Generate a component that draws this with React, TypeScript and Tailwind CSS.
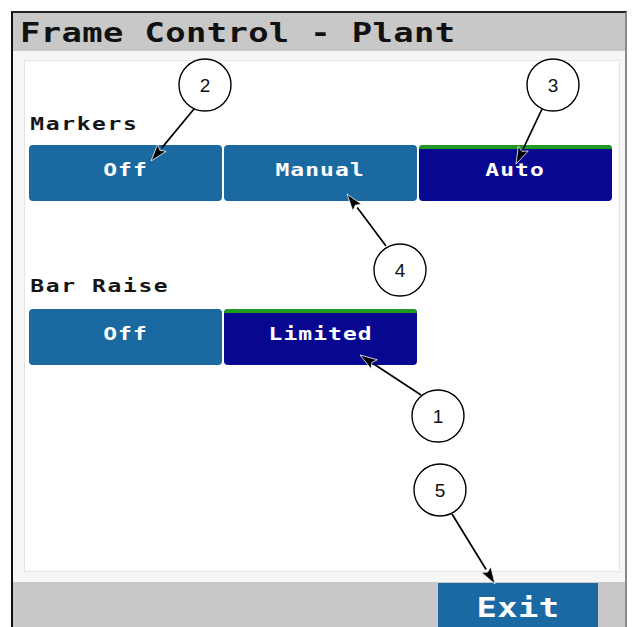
const mono = { fontFamily: '"DejaVu Sans Mono", "Liberation Mono", monospace' };

type Seg = { label: string; active?: boolean };

const markers: Seg[] = [{ label: 'Off' }, { label: 'Manual' }, { label: 'Auto', active: true }];
const barRaise: Seg[] = [{ label: 'Off' }, { label: 'Limited', active: true }];

function SegButton({ seg }: { seg: Seg }) {
  return (
    <div
      className={`w-[193px] h-[56px] rounded-[4px] flex items-center justify-center text-white font-bold text-[17px] tracking-[0.8px] overflow-hidden relative ${
        seg.active ? 'bg-[#07078f]' : 'bg-[#1a69a0]'
      }`}
    >
      {seg.active && <div className="absolute top-0 left-0 right-0 h-[4px] bg-[#1e9a22]" />}
      <span className="inline-block scale-x-[1.35] -mt-[5px]">{seg.label}</span>
    </div>
  );
}

function Callout({ cx, cy, n, from, to }: { cx: number; cy: number; n: string; from: [number, number]; to: [number, number] }) {
  const [x1, y1] = from;
  const [x2, y2] = to;
  const dx = x2 - x1;
  const dy = y2 - y1;
  const len = Math.hypot(dx, dy);
  const ux = dx / len;
  const uy = dy / len;
  const hl = 17;
  const hw = 5.5;
  const bx = x2 - ux * hl;
  const by = y2 - uy * hl;
  const pts = `${x2},${y2} ${bx - uy * hw},${by + ux * hw} ${bx + ux * 3},${by + uy * 3} ${bx + uy * hw},${by - ux * hw}`;
  return (
    <g>
      <ellipse cx={cx} cy={cy} rx={26} ry={26} fill="white" stroke="black" strokeWidth={1.4} />
      <text x={cx} y={cy + 7} textAnchor="middle" fontSize={19} fontFamily="Liberation Sans, Arial, sans-serif" fill="#111">
        {n}
      </text>
      <line x1={x1} y1={y1} x2={bx} y2={by} stroke="black" strokeWidth={1.7} />
      <polygon points={pts} fill="black" stroke="white" strokeWidth={0.8} />
    </g>
  );
}

export default function App() {
  return (
    <div className="w-[635px] h-[627px] bg-white relative overflow-hidden" style={mono}>
      <div className="ml-[11px] mt-[11px] w-[616px] h-[616px] border-l-2 border-t-2 border-r-2 border-l-[#111] border-t-[#222] border-r-[#8a8a8a] flex flex-col">
        <div className="h-[38px] bg-[#c8c8c8] pl-[7px] flex items-center shrink-0">
          <span className="inline-block origin-left scale-x-[1.3] text-[26px] font-bold tracking-[0.3px] text-[#111] leading-none mt-[2px]">
            Frame Control - Plant
          </span>
        </div>

        <div className="flex-1 bg-[#f6f6f6] pt-[9px] pl-[11px] pr-[5px] pb-[10px] flex flex-col">
          <div className="flex-1 bg-white border border-[#e4e4e4] pl-[4px] pt-[52px]">
            <div className="origin-left scale-x-[1.35] text-[17px] font-bold tracking-[1.2px] text-[#151515] leading-[22px] pl-[1px]">Markers</div>
            <div className="mt-[10px] flex gap-[2px]">
              {markers.map((s) => (
                <SegButton key={s.label} seg={s} />
              ))}
            </div>

            <div className="mt-[74px] origin-left scale-x-[1.35] text-[17px] font-bold tracking-[1.2px] text-[#151515] leading-[22px] pl-[1px]">Bar Raise</div>
            <div className="mt-[12px] flex gap-[2px]">
              {barRaise.map((s) => (
                <SegButton key={s.label} seg={s} />
              ))}
            </div>
          </div>
        </div>

        <div className="h-[45px] bg-[#c9c9c9] shrink-0 flex justify-end pr-[27px] pt-[1px] overflow-hidden">
          <div className="w-[160px] h-[50px] bg-[#1a69a3] flex justify-center pt-[12px]">
            <span className="inline-block scale-x-[1.3] text-[26px] font-bold tracking-[0.3px] text-white leading-none">Exit</span>
          </div>
        </div>
      </div>

      <svg className="absolute inset-0 pointer-events-none" width={635} height={627} viewBox="0 0 635 627">
        <Callout cx={205} cy={85} n="2" from={[194, 109]} to={[151, 161]} />
        <Callout cx={553} cy={85} n="3" from={[542, 109]} to={[516, 164]} />
        <Callout cx={400} cy={270} n="4" from={[386, 246]} to={[347, 194]} />
        <Callout cx={438} cy={416} n="1" from={[421, 395]} to={[360, 355]} />
        <Callout cx={440} cy={490} n="5" from={[452, 514]} to={[495, 584]} />
      </svg>
    </div>
  );
}
